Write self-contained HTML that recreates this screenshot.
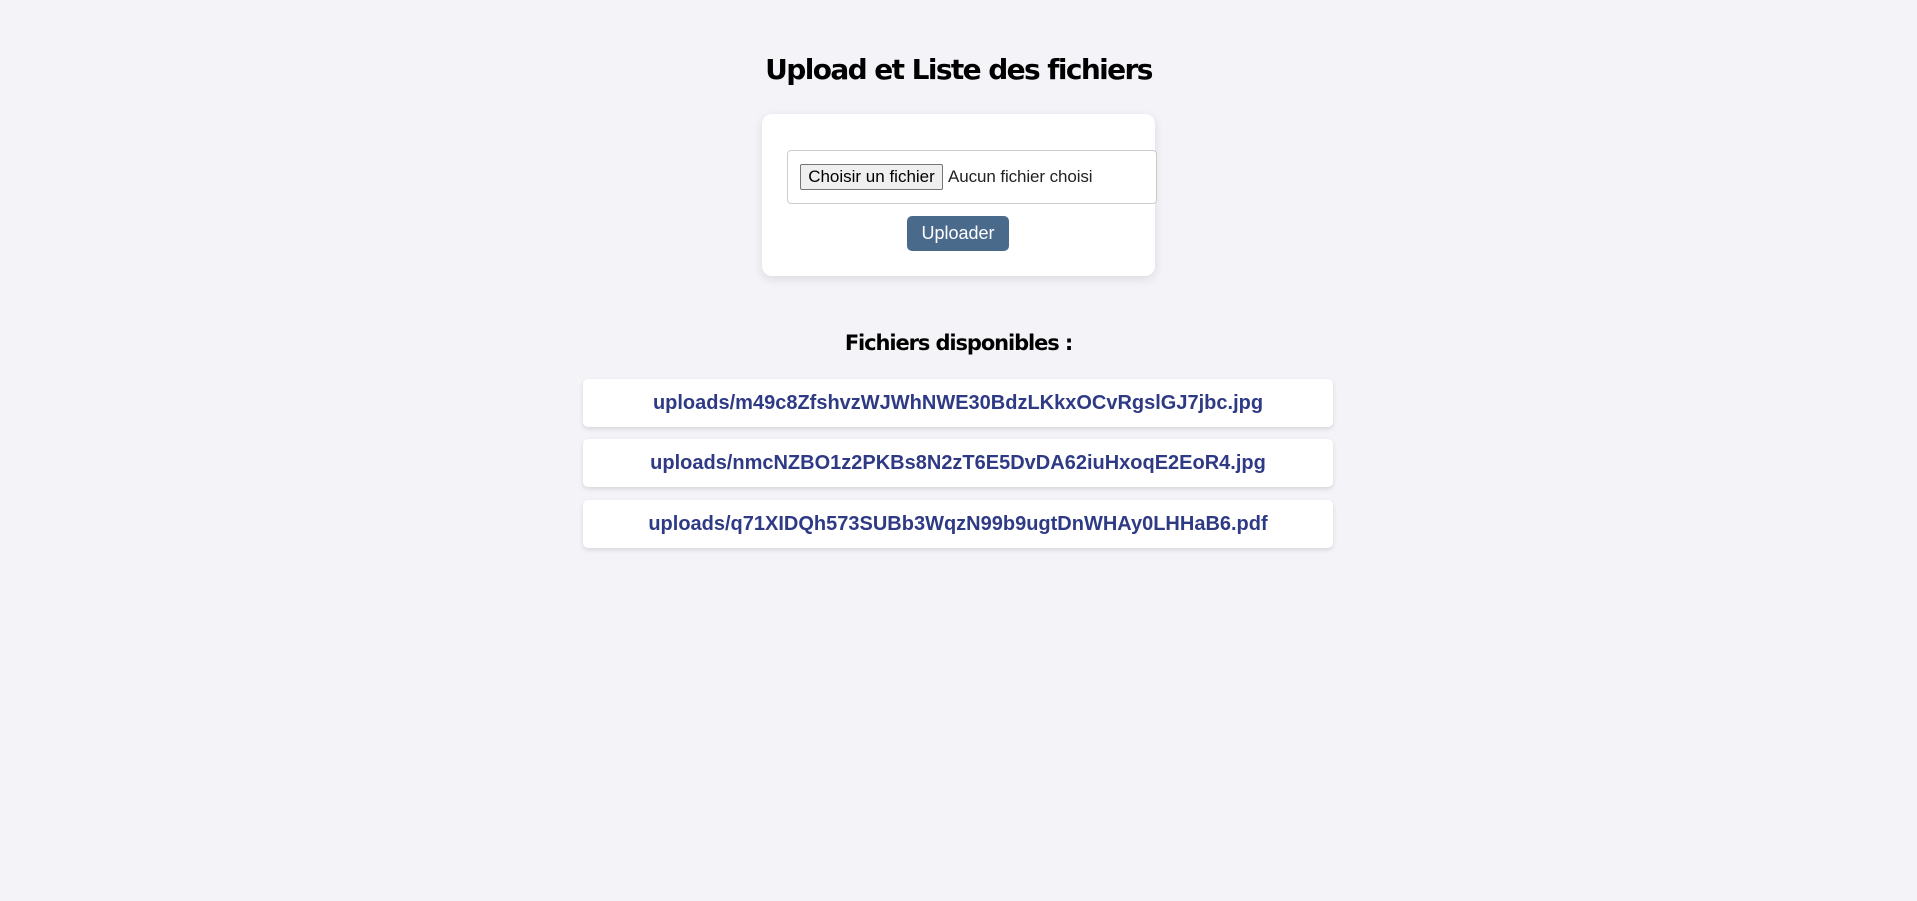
<!DOCTYPE html>
<html><head><meta charset="utf-8"><style>
body{margin:0;width:1917px;height:901px;background:#f4f4f8;font-family:"Liberation Sans",Arial,sans-serif;position:relative;overflow:hidden}
h1{position:absolute;left:0;width:1917px;top:53px;margin:0;text-align:center;font-size:28px;font-weight:bold;font-family:"DejaVu Sans","Liberation Sans",sans-serif;letter-spacing:-1.6px;color:#000}
.card{position:absolute;left:762px;top:114px;width:393px;height:162px;background:#fff;border-radius:10px;box-shadow:0 3px 10px rgba(0,0,0,0.1)}
.inp{position:absolute;left:787px;top:150px;width:368px;height:52px;border:1px solid #ccc;border-radius:4px;background:#fff}
.fbtn{position:absolute;left:800px;top:164px;width:143px;height:26px;box-sizing:border-box;border:1px solid #767676;background:#efefef;border-radius:2px;font-size:17px;line-height:24px;text-align:center;color:#000}
.nf{position:absolute;left:948px;top:165px;font-size:17px;line-height:24px;color:#222;letter-spacing:-0.1px}
.up{position:absolute;left:907px;top:216px;width:102px;height:35px;background:#4a6a8c;border-radius:5px;color:#fff;font-size:18px;line-height:35px;text-align:center}
h2{position:absolute;left:0;width:1917px;top:331px;margin:0;text-align:center;font-size:21px;font-weight:bold;font-family:"DejaVu Sans","Liberation Sans",sans-serif;letter-spacing:-1.1px;color:#000}
.item{position:absolute;left:583px;width:750px;height:48px;background:#fff;border-radius:5px;box-shadow:0 2px 5px rgba(0,0,0,0.12);text-align:center;line-height:48px;font-size:20px;font-weight:bold;color:#2f3a85;letter-spacing:0}
</style></head><body>
<h1>Upload et Liste des fichiers</h1>
<div class="card"></div>
<div class="inp"></div>
<div class="fbtn">Choisir un fichier</div>
<div class="nf">Aucun fichier choisi</div>
<div class="up">Uploader</div>
<h2>Fichiers disponibles :</h2>
<div class="item" style="top:379px">uploads/m49c8ZfshvzWJWhNWE30BdzLKkxOCvRgslGJ7jbc.jpg</div>
<div class="item" style="top:439px">uploads/nmcNZBO1z2PKBs8N2zT6E5DvDA62iuHxoqE2EoR4.jpg</div>
<div class="item" style="top:500px">uploads/q71XIDQh573SUBb3WqzN99b9ugtDnWHAy0LHHaB6.pdf</div>
</body></html>
